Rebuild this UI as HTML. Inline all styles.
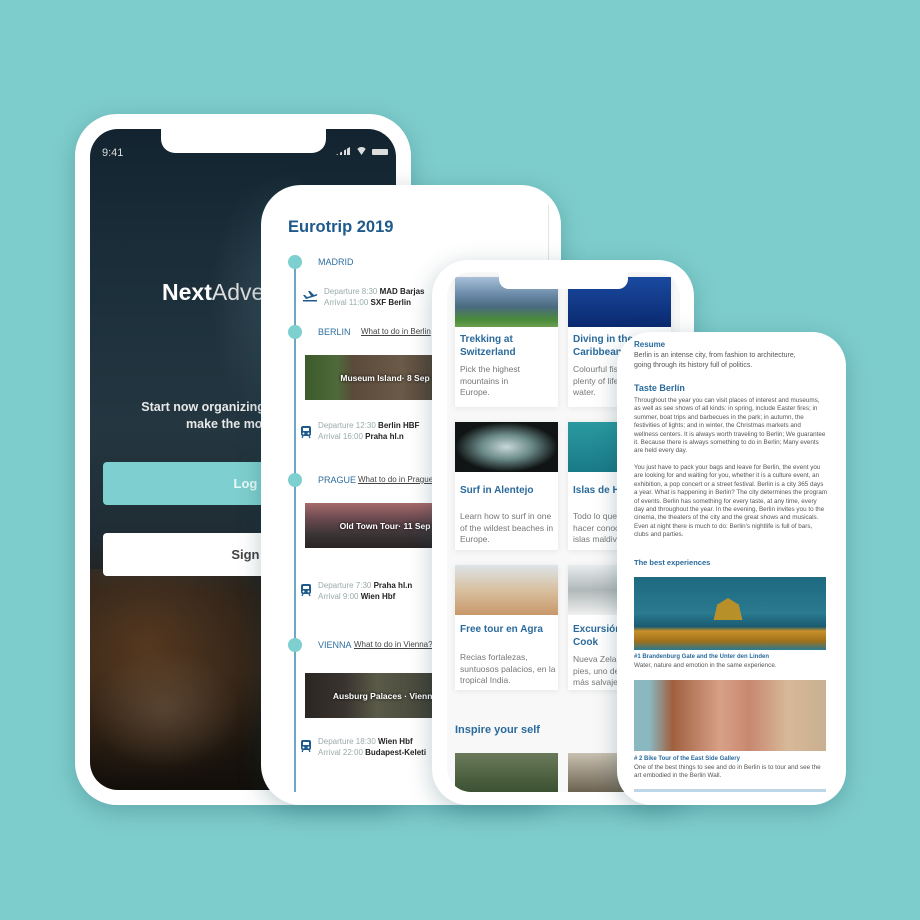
<!DOCTYPE html>
<html><head><meta charset="utf-8">
<style>
*{margin:0;padding:0;box-sizing:border-box}
body{width:920px;height:920px;background:#7ecdcd;position:relative;overflow:hidden;font-family:"Liberation Sans",sans-serif}
.a{position:absolute}
.phone{position:absolute;background:#fff;box-shadow:0 6px 24px rgba(0,60,70,.25)}
.screen{position:absolute;overflow:hidden}
.tl{font-size:9px;color:#2f6fa0}
.lnk{font-size:8px;color:#444;text-decoration:underline}
.dep{font-size:8px;color:#9aa;line-height:11px;white-space:nowrap}
.dep b{color:#222}
.dot{position:absolute;width:14px;height:14px;border-radius:50%;background:#7ecfcf;left:288px}
.img{position:absolute;color:#fff;font-size:8.5px;font-weight:bold;display:flex;align-items:center;justify-content:center;white-space:nowrap;text-shadow:0 0 3px #000}
.card{position:absolute;background:#fff;box-shadow:0 1px 6px rgba(0,0,0,.08);width:103px}
.card .im{height:50px}
.card h4{font-size:10px;color:#2a6a9c;line-height:13px;padding:6px 5px 0;white-space:nowrap}
.card p{font-size:8.5px;color:#777;line-height:11.5px;padding:0 5px;white-space:nowrap}
.p4{font-size:6.3px;color:#555;line-height:8.4px;white-space:nowrap}
</style></head><body>

<!-- Phone 1 -->
<div class="phone" style="left:75px;top:114px;width:336px;height:691px;border-radius:42px"></div>
<div class="screen" style="left:90px;top:129px;width:306px;height:661px;border-radius:28px;background:linear-gradient(180deg,#132430 0%,#1c303c 25%,#243640 45%,#1f2c34 62%,#241e18 70%,#2a2016 82%,#120e0a 100%)">
  <div class="a" style="left:120px;top:40px;width:140px;height:260px;background:radial-gradient(ellipse,rgba(140,160,170,.22),transparent 70%)"></div>
  <div class="a" style="left:-20px;top:440px;width:220px;height:220px;background:radial-gradient(ellipse at 35% 35%,rgba(130,80,40,.5),transparent 70%)"></div>
  <div class="a" style="left:0;top:520px;width:150px;height:120px;background:radial-gradient(ellipse,rgba(120,100,80,.45),transparent 70%)"></div>
  <div class="a" style="left:12px;top:18px;color:#ddd;font-size:11px">9:41</div>
  <div class="a" style="left:246px;top:18px;width:14px;height:8px;background:linear-gradient(90deg,#ddd 0 2px,transparent 2px 4px,#ddd 4px 6px,transparent 6px 8px,#ddd 8px 10px,transparent 10px 11px,#ddd 11px 13px);clip-path:polygon(0 100%,100% 0,100% 100%)"></div>
  <div class="a" style="left:266px;top:18px;width:11px;height:8px;border-radius:8px 8px 0 0;background:#ddd;clip-path:polygon(0 0,100% 0,50% 100%)"></div>
  <div class="a" style="left:282px;top:20px;width:16px;height:6px;background:#ddd;border-radius:1px"></div>
  <div class="a" style="left:72px;top:150px;color:#fff;font-size:23px;white-space:nowrap"><b>Next</b><span style="font-weight:300;color:#ddd">Adventure</span></div>
  <div class="a" style="left:0;width:306px;top:270px;text-align:center;color:#e8e8e8;font-size:12.5px;font-weight:bold;line-height:17px;white-space:nowrap">Start now organizing your trip and<br>make the most of it</div>
  <div class="a" style="left:13px;top:333px;width:300px;height:43px;background:#7ecfcf;border-radius:4px;color:#e8fafa;font-size:13px;font-weight:bold;text-align:center;line-height:43px">Log in</div>
  <div class="a" style="left:13px;top:404px;width:300px;height:43px;background:#fff;border-radius:4px;color:#444;font-size:13px;font-weight:bold;text-align:center;line-height:43px">Sign in</div>
</div>
<div class="a" style="left:161px;top:127px;width:165px;height:26px;background:#fff;border-radius:0 0 14px 14px"></div>

<!-- Phone 2 -->
<div class="phone" style="left:261px;top:185px;width:300px;height:620px;border-radius:40px"></div>
<div class="a" style="left:548px;top:205px;width:1px;height:585px;background:#e4e4e4"></div>
<div class="a" style="left:288px;top:218px;font-size:16.5px;font-weight:bold;color:#1e5a8c">Eurotrip 2019</div>
<div class="a" style="left:294px;top:262px;width:2px;height:530px;background:#6ea6c8"></div>
<div class="dot" style="top:255px"></div>
<div class="dot" style="top:325px"></div>
<div class="dot" style="top:473px"></div>
<div class="dot" style="top:638px"></div>
<div class="a tl" style="left:318px;top:257px">MADRID</div>
<svg class="a" style="left:302px;top:288px" width="16" height="14" viewBox="0 0 16 14"><path d="M1 7 L3 7 L5 9 L9 8 L6 3 L8 3 L12 7 L15 6 Q16 7 14 8 L4 11 Z" fill="#1e5a8c"/><rect x="1" y="12" width="14" height="1.5" fill="#1e5a8c"/></svg>
<div class="a dep" style="left:324px;top:286px">Departure 8:30 <b>MAD Barjas</b><br>Arrival 11:00 <b>SXF Berlin</b></div>
<div class="a tl" style="left:318px;top:327px">BERLIN</div>
<div class="a lnk" style="left:361px;top:327px">What to do in Berlin</div>
<div class="img" style="left:305px;top:355px;width:160px;height:45px;background:linear-gradient(90deg,#3d5a2a 0,#4e6a3a 20%,#5a4a3a 30%,#6b5a48 60%,#3a3028 100%)">Museum Island· 8 Sep</div>
<svg class="a" style="left:300px;top:425px" width="12" height="14" viewBox="0 0 12 14"><rect x="1" y="1" width="10" height="10" rx="2" fill="#1e5a8c"/><rect x="3" y="3" width="6" height="3" fill="#fff"/><circle cx="3.5" cy="8.5" r="1" fill="#fff"/><circle cx="8.5" cy="8.5" r="1" fill="#fff"/><path d="M3 11 L2 13 M9 11 L10 13" stroke="#1e5a8c" stroke-width="1.3"/></svg>
<div class="a dep" style="left:318px;top:420px">Departure 12:30 <b>Berlin HBF</b><br>Arrival 16:00 <b>Praha hl.n</b></div>
<div class="a tl" style="left:318px;top:475px">PRAGUE</div>
<div class="a lnk" style="left:358px;top:475px">What to do in Prague</div>
<div class="img" style="left:305px;top:503px;width:160px;height:45px;background:linear-gradient(180deg,#a86a6a 0,#6a4a50 35%,#3a3436 70%,#2a2424 100%)">Old Town Tour· 11 Sep</div>
<svg class="a" style="left:300px;top:583px" width="12" height="14" viewBox="0 0 12 14"><rect x="1" y="1" width="10" height="10" rx="2" fill="#1e5a8c"/><rect x="3" y="3" width="6" height="3" fill="#fff"/><circle cx="3.5" cy="8.5" r="1" fill="#fff"/><circle cx="8.5" cy="8.5" r="1" fill="#fff"/><path d="M3 11 L2 13 M9 11 L10 13" stroke="#1e5a8c" stroke-width="1.3"/></svg>
<div class="a dep" style="left:318px;top:580px">Departure 7:30 <b>Praha hl.n</b><br>Arrival 9:00 <b>Wien Hbf</b></div>
<div class="a tl" style="left:318px;top:640px">VIENNA</div>
<div class="a lnk" style="left:354px;top:640px">What to do in Vienna?</div>
<div class="img" style="left:305px;top:673px;width:160px;height:45px;background:linear-gradient(90deg,#2a2622 0,#3a3430 25%,#5a5a48 45%,#4a4a3e 70%,#2a2a24 100%)">Ausburg Palaces · Vienna</div>
<svg class="a" style="left:300px;top:739px" width="12" height="14" viewBox="0 0 12 14"><rect x="1" y="1" width="10" height="10" rx="2" fill="#1e5a8c"/><rect x="3" y="3" width="6" height="3" fill="#fff"/><circle cx="3.5" cy="8.5" r="1" fill="#fff"/><circle cx="8.5" cy="8.5" r="1" fill="#fff"/><path d="M3 11 L2 13 M9 11 L10 13" stroke="#1e5a8c" stroke-width="1.3"/></svg>
<div class="a dep" style="left:318px;top:736px">Departure 18:30 <b>Wien Hbf</b><br>Arrival 22:00 <b>Budapest-Keleti</b></div>

<!-- Phone 3 -->
<div class="phone" style="left:432px;top:260px;width:262px;height:545px;border-radius:36px"></div>
<div class="screen" style="left:447px;top:272px;width:233px;height:520px;border-radius:24px;background:#f8f8f8">
  <div class="card" style="left:8px;top:5px;height:130px"><div class="im" style="background:linear-gradient(180deg,#a8c0d8 0,#6a8aa8 35%,#4a6a80 60%,#4a8a3a 85%,#6aa050 100%)"></div><h4>Trekking at<br>Switzerland</h4><p style="padding-top:5px">Pick the highest<br>mountains in<br>Europe.</p></div>
  <div class="card" style="left:121px;top:5px;height:130px"><div class="im" style="background:linear-gradient(180deg,#1a4aa0,#0a2a70)"></div><h4>Diving in the<br>Caribbean</h4><p style="padding-top:5px">Colourful fish and<br>plenty of life under<br>water.</p></div>
  <div class="card" style="left:8px;top:150px;height:128px"><div class="im" style="background:radial-gradient(ellipse at 50% 50%,#c8d8d8 0,#6a8a88 35%,#101414 70%)"></div><h4 style="padding-top:12px">Surf in Alentejo</h4><p style="padding-top:14px">Learn how to surf in one<br>of the wildest beaches in<br>Europe.</p></div>
  <div class="card" style="left:121px;top:150px;height:128px"><div class="im" style="background:linear-gradient(180deg,#2a9aa0,#1a7a88)"></div><h4 style="padding-top:12px">Islas de Hiloc</h4><p style="padding-top:14px">Todo lo que debes<br>hacer conocer las<br>islas maldivas.</p></div>
  <div class="card" style="left:8px;top:293px;height:125px"><div class="im" style="background:linear-gradient(180deg,#dde4e8 0,#d8c0a0 50%,#c8986a 100%)"></div><h4 style="padding-top:8px">Free tour en Agra</h4><p style="padding-top:16px">Recias fortalezas,<br>suntuosos palacios, en la<br>tropical India.</p></div>
  <div class="card" style="left:121px;top:293px;height:125px"><div class="im" style="background:linear-gradient(180deg,#e8ecee 0,#b0b8b8 50%,#f0f0f0 100%)"></div><h4 style="padding-top:8px">Excursión Mt<br>Cook</h4><p style="padding-top:5px">Nueva Zelanda a tus<br>pies, uno de los sitios<br>más salvajes.</p></div>
  <div class="a" style="left:8px;top:452px;font-size:11px;font-weight:bold;color:#2a6a9c">Inspire your self</div>
  <div class="a" style="left:8px;top:481px;width:103px;height:40px;background:linear-gradient(180deg,#6a7a5a,#3a5030)"></div>
  <div class="a" style="left:121px;top:481px;width:103px;height:40px;background:linear-gradient(180deg,#c8c0b0,#6a6050)"></div>
</div>
<div class="a" style="left:499px;top:272px;width:129px;height:17px;background:#fff;border-radius:0 0 10px 10px"></div>

<!-- Phone 4 -->
<div class="phone" style="left:617px;top:332px;width:229px;height:473px;border-radius:34px"></div>
<div class="screen" style="left:630px;top:340px;width:202px;height:452px;background:#fff">
  <div class="a" style="left:4px;top:0;font-size:8px;font-weight:bold;color:#2a6a9c">Resume</div>
  <div class="a p4" style="left:4px;top:11px;font-size:7px;line-height:10px">Berlin is an intense city, from fashion to architecture,<br>going through its history full of politics.</div>
  <div class="a" style="left:4px;top:43px;font-size:9px;font-weight:bold;color:#2a6a9c">Taste Berlín</div>
  <div class="a p4" style="left:4px;top:57px">Throughout the year you can visit places of interest and museums,<br>as well as see shows of all kinds: in spring, include Easter fires; in<br>summer, boat trips and barbecues in the park; in autumn, the<br>festivities of lights; and in winter, the Christmas markets and<br>wellness centers. It is always worth traveling to Berlin; We guarantee<br>it. Because there is always something to do in Berlin; Many events<br>are held every day.</div>
  <div class="a p4" style="left:4px;top:124px">You just have to pack your bags and leave for Berlin, the event you<br>are looking for and waiting for you, whether it is a culture event, an<br>exhibition, a pop concert or a street festival. Berlin is a city 365 days<br>a year. What is happening in Berlin? The city determines the program<br>of events. Berlin has something for every taste, at any time, every<br>day and throughout the year. In the evening, Berlin invites you to the<br>cinema, the theaters of the city and the great shows and musicals.<br>Even at night there is much to do: Berlin's nightlife is full of bars,<br>clubs and parties.</div>
  <div class="a" style="left:4px;top:218px;font-size:7.5px;font-weight:bold;color:#2a6a9c">The best experiences</div>
  <div class="a" style="left:4px;top:237px;width:192px;height:73px;background:linear-gradient(180deg,#1e6a80 0,#2a7a90 50%,#1a5a70 68%,#c8902a 74%,#a0701a 88%,#2a7a90 100%)"></div>
  <div class="a" style="left:80px;top:258px;width:36px;height:22px;background:#b8902a;clip-path:polygon(10% 100%,20% 30%,50% 0,80% 30%,90% 100%)"></div>
  <div class="a" style="left:4px;top:314px;font-size:6px;font-weight:bold;color:#2a6a9c;white-space:nowrap">#1 Brandenburg Gate and the Unter den Linden</div>
  <div class="a p4" style="left:4px;top:322px">Water, nature and emotion in the same experience.</div>
  <div class="a" style="left:4px;top:340px;width:192px;height:71px;background:linear-gradient(90deg,#8ab8c0 0,#8ab8c0 8%,#a06040 20%,#d8a088 45%,#c88870 60%,#d8b898 80%,#c8b090 100%)"></div>
  <div class="a" style="left:4px;top:416px;font-size:6px;font-weight:bold;color:#2a6a9c;white-space:nowrap"># 2 Bike Tour of the East Side Gallery</div>
  <div class="a p4" style="left:4px;top:424px">One of the best things to see and do in Berlin is to tour and see the<br>art embodied in the Berlin Wall.</div>
  <div class="a" style="left:4px;top:449px;width:192px;height:4px;background:#bcd8e8"></div>
</div>
</body></html>
